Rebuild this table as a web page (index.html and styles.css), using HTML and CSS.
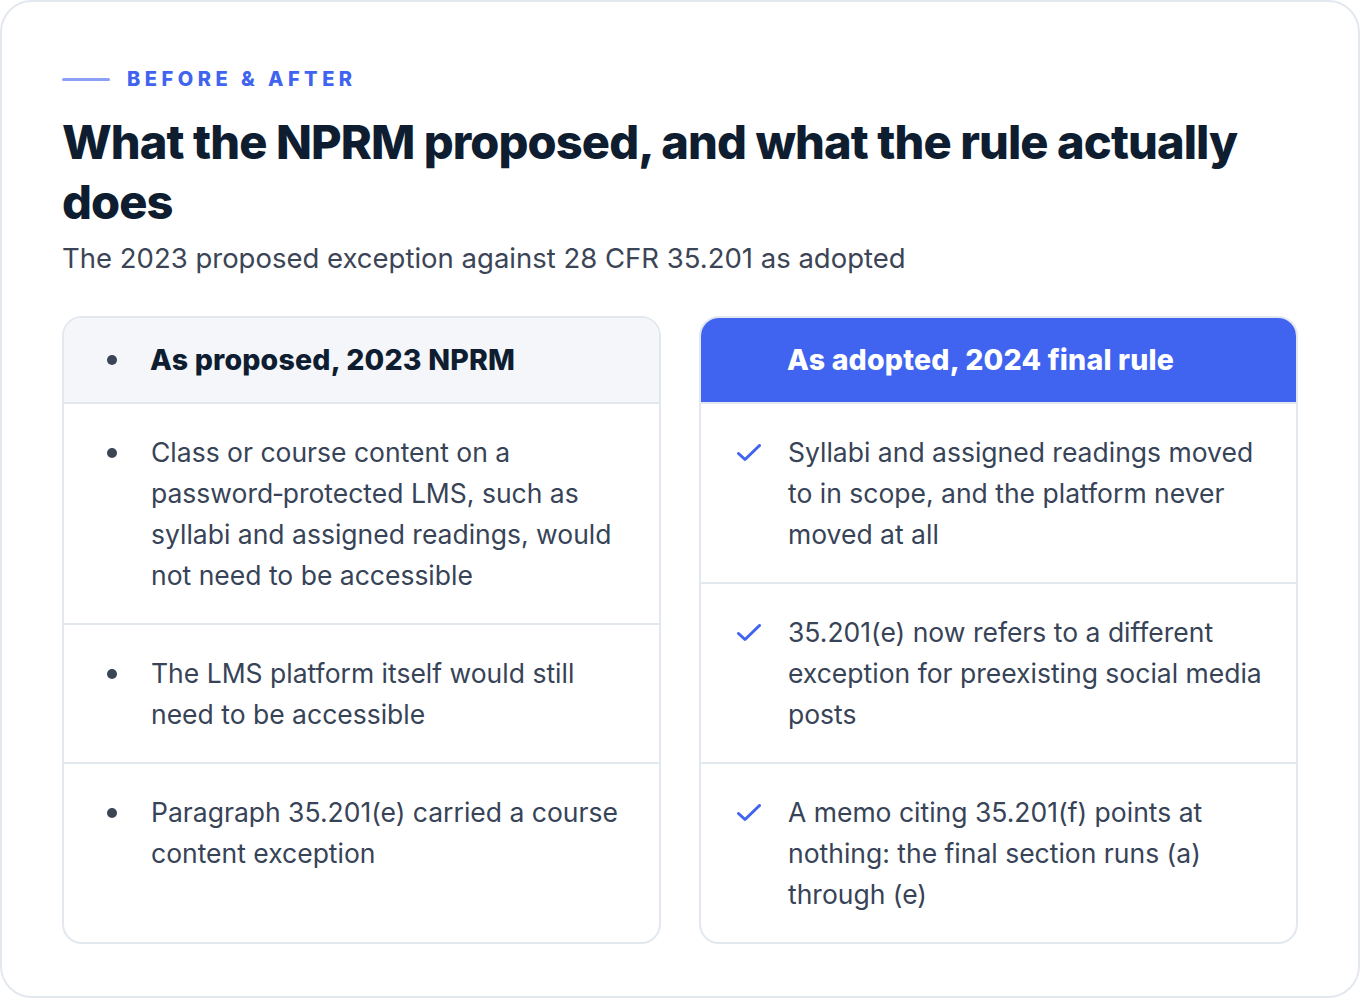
FILE: index.html
```html
<!DOCTYPE html>
<html lang="en">
<head>
<meta charset="utf-8">
<title>Before &amp; After</title>
<link rel="stylesheet" href="styles.css">
</head>
<body>
<main class="frame">
  <div class="eyebrow"><span class="eyebrow-line"></span><span class="eyebrow-text">BEFORE &amp; AFTER</span></div>
  <h1 class="title">What the NPRM proposed, and what the rule actually does</h1>
  <p class="subtitle">The 2023 proposed exception against 28 CFR 35.201 as adopted</p>
  <div class="compare">
    <section class="card">
      <header class="card-head card-head--before">
        <span class="marker"><span class="dot"></span></span>
        <h2 class="card-title">As proposed, 2023 NPRM</h2>
      </header>
      <div class="row">
        <span class="marker"><span class="dot"></span></span>
        <p class="row-text">Class or course content on a password&#8209;protected LMS, such as syllabi and assigned readings, would not need to be accessible</p>
      </div>
      <div class="row">
        <span class="marker"><span class="dot"></span></span>
        <p class="row-text">The LMS platform itself would still need to be accessible</p>
      </div>
      <div class="row row--last">
        <span class="marker"><span class="dot"></span></span>
        <p class="row-text">Paragraph 35.201(e) carried a course content exception</p>
      </div>
    </section>
    <section class="card">
      <header class="card-head card-head--after">
        <span class="marker"></span>
        <h2 class="card-title">As adopted, 2024 final rule</h2>
      </header>
      <div class="row">
        <span class="marker"><svg class="check" viewBox="0 0 24 18" width="24" height="18"><path d="M1.5 9.5 L8 15.5 L22.5 1.5" fill="none" stroke="currentColor" stroke-width="3" stroke-linecap="round" stroke-linejoin="round"/></svg></span>
        <p class="row-text">Syllabi and assigned readings moved to in scope, and the platform never moved at all</p>
      </div>
      <div class="row">
        <span class="marker"><svg class="check" viewBox="0 0 24 18" width="24" height="18"><path d="M1.5 9.5 L8 15.5 L22.5 1.5" fill="none" stroke="currentColor" stroke-width="3" stroke-linecap="round" stroke-linejoin="round"/></svg></span>
        <p class="row-text">35.201(e) now refers to a different exception for preexisting social media posts</p>
      </div>
      <div class="row row--last">
        <span class="marker"><svg class="check" viewBox="0 0 24 18" width="24" height="18"><path d="M1.5 9.5 L8 15.5 L22.5 1.5" fill="none" stroke="currentColor" stroke-width="3" stroke-linecap="round" stroke-linejoin="round"/></svg></span>
        <p class="row-text">A memo citing 35.201(f) points at nothing: the final section runs (a) through (e)</p>
      </div>
    </section>
  </div>
</main>
</body>
</html>
```
FILE: styles.css
```css
* { box-sizing: border-box; }
html, body { margin: 0; padding: 0; background: #ffffff; }
body { font-family: "Inter", "Noto Sans", sans-serif; color: #374357; }

.frame {
  width: 1360px;
  height: 998px;
  border: 2px solid #e3e8ef;
  border-radius: 32px;
  padding: 62px 60px 0 60px;
  overflow: hidden;
}

.eyebrow { display: flex; align-items: center; gap: 17px; height: 30px; }
.eyebrow-line { width: 48px; height: 3px; background: #8ca1f6; border-radius: 2px; }
.eyebrow-text {
  font-family: "Inter", sans-serif;
  font-weight: 800;
  font-size: 20px;
  letter-spacing: 4.5px;
  color: #4064f0;
}

.title {
  margin: 18px 0 0 0;
  font-family: "Inter", sans-serif;
  font-weight: 800;
  font-size: 47px;
  line-height: 60px;
  letter-spacing: -0.9px;
  color: #0f1d31;
}

.subtitle {
  margin: 6px 0 0 0;
  font-size: 27.5px;
  line-height: 40px;
  color: #3b4556;
}

.compare {
  margin-top: 38px;
  display: grid;
  grid-template-columns: 1fr 1fr;
  gap: 38px;
  align-items: stretch;
}

.card {
  border: 2px solid #e3e8ef;
  border-radius: 20px;
  overflow: hidden;
  display: flex;
  flex-direction: column;
}

.card-head {
  display: flex;
  align-items: center;
  gap: 26px;
  padding: 22px 28px 22px 36px;
  border-bottom: 2px solid #e3e8ef;
}
.card-head--before { background: #f4f6fa; color: #0f1d31; }
.card-head--after { background: #4064f0; color: #ffffff; }

.card-title {
  margin: 0;
  font-family: "Inter", sans-serif;
  font-weight: 800;
  font-size: 28.5px;
  line-height: 40px;
  letter-spacing: 0.2px;
}

.marker {
  flex: 0 0 24px;
  width: 24px;
  height: 41px;
  display: flex;
  align-items: center;
  justify-content: center;
  color: #4064f0;
}
.card-head .marker { height: 40px; }

.dot { width: 10px; height: 10px; border-radius: 50%; background: #3b4556; }
.check { display: block; }

.row {
  display: flex;
  align-items: flex-start;
  gap: 27px;
  padding: 28px 28px 27px 36px;
  border-bottom: 2px solid #e3e8ef;
}
.row--last { border-bottom: none; flex: 1; }

.row-text {
  margin: 0;
  font-size: 26.5px;
  line-height: 41px;
  color: #374357;
}
```
